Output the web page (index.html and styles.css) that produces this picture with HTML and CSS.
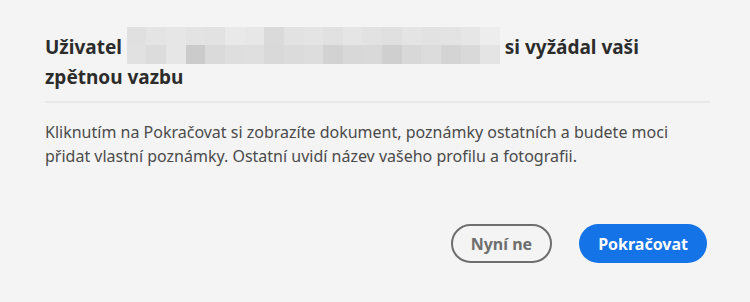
FILE: index.html
```html
<!DOCTYPE html>
<html lang="cs">

<head>
    <meta charset="utf-8">
    <title>Žádost o zpětnou vazbu</title>
    <link rel="stylesheet" href="styles.css">
</head>

<body>
    <div class="dialog">
        <h1 class="dialog-title">Uživatel <span class="redacted"><span class="redacted-grid"><i style="background:#e0e0e0"></i><i style="background:#e4e4e4"></i><i style="background:#e6e6e6"></i><i style="background:#e3e3e3"></i><i style="background:#e2e2e2"></i><i style="background:#e9e9e9"></i><i style="background:#e7e7e7"></i><i style="background:#dadada"></i><i style="background:#e2e2e2"></i><i style="background:#e4e4e4"></i><i style="background:#e1e1e1"></i><i style="background:#e5e5e5"></i><i style="background:#e2e2e2"></i><i style="background:#e0e0e0"></i><i style="background:#e4e4e4"></i><i style="background:#e2e2e2"></i><i style="background:#e3e3e3"></i><i style="background:#e6e6e6"></i><i style="background:#ededed"></i><i style="background:#e1e1e1"></i><i style="background:#dcdcdc"></i><i style="background:#e6e6e6"></i><i style="background:#cbcbcb"></i><i style="background:#dadada"></i><i style="background:#dedede"></i><i style="background:#dfdfdf"></i><i style="background:#d9d9d9"></i><i style="background:#dbdbdb"></i><i style="background:#dddddd"></i><i style="background:#d2d2d2"></i><i style="background:#d8d8d8"></i><i style="background:#d9d9d9"></i><i style="background:#cfcfcf"></i><i style="background:#d8d8d8"></i><i style="background:#dcdcdc"></i><i style="background:#d4d4d4"></i><i style="background:#d9d9d9"></i><i style="background:#e4e4e4"></i></span></span> <span>si vyžádal vaši</span> <span>zpětnou vazbu</span></h1>

        <p class="dialog-text">Kliknutím na Pokračovat si zobrazíte dokument, poznámky ostatních a budete moci přidat vlastní poznámky. Ostatní uvidí název vašeho profilu a fotografii.</p>

        <div class="dialog-actions">
            <button class="btn btn-secondary">Nyní ne</button>
            <button class="btn btn-primary">Pokračovat</button>
        </div>
    </div>
</body>

</html>
```

FILE: styles.css
```css
:root {
    --bg-color: #f4f4f4;
    --text-color: #2c2c2c;
    --body-color: #4b4b4b;
    --blue: #1473e6;
    --gray: #6e6e6e;
}

html,
body {
    margin: 0;
    height: 100%;
}

body {
    background: var(--bg-color);
    font-family: 'Noto Sans', 'Open Sans', sans-serif;
}

.dialog {
    box-sizing: border-box;
    height: 100%;
    display: flex;
    flex-direction: column;
    padding: 34px 40px 39px 45px;
}

.dialog-title {
    margin: 0;
    padding-bottom: 10px;
    border-bottom: 2px solid #e8e8e8;
    font-size: 19px;
    line-height: 27px;
    font-weight: bold;
    color: var(--text-color);
}

/* rozmazané jméno uživatele */
.redacted {
    display: inline-block;
    overflow: hidden;
    width: 373px;
    height: 37px;
    margin-top: -10px;
    vertical-align: -10px;
}

.redacted-grid {
    display: grid;
    grid-template-columns: repeat(19, 1fr);
    grid-template-rows: 18px 19px;
}

.dialog-text {
    margin: 17px 0 0;
    font-size: 16px;
    line-height: 24px;
    color: var(--body-color);
}

.dialog-actions {
    margin-top: auto;
    display: flex;
    justify-content: flex-end;
    gap: 27px;
    padding-right: 3px;
}

.btn {
    height: 39px;
    padding: 0 19px;
    border-radius: 20px;
    font-family: inherit;
    font-size: 16px;
    font-weight: bold;
    cursor: pointer;
}

.btn-secondary {
    background: transparent;
    border: 2px solid var(--gray);
    color: var(--gray);
    padding: 0 18px;
}

.btn-primary {
    background: var(--blue);
    border: none;
    color: white;
}
```
